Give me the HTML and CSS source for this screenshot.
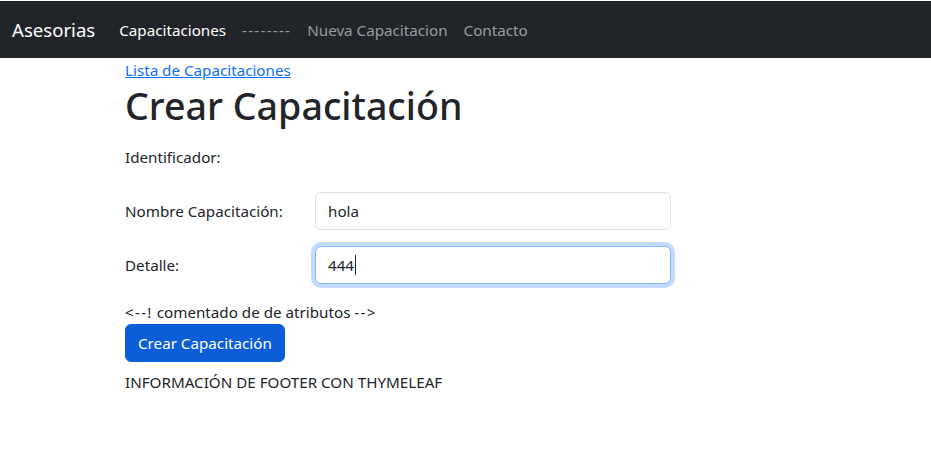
FILE: index.html
```html
<!DOCTYPE html>
<html lang="es">
<head>
<meta charset="utf-8">
<title>Crear Capacitación</title>
<link rel="stylesheet" href="styles.css">
</head>
<body>
<nav class="navbar">
  <a class="brand" href="#">Asesorias</a>
  <ul class="nav">
    <li><a class="nav-link active" href="#">Capacitaciones</a></li>
    <li><a class="nav-link dashes" href="#">--------</a></li>
    <li><a class="nav-link" href="#">Nueva Capacitacion</a></li>
    <li><a class="nav-link" href="#">Contacto</a></li>
  </ul>
</nav>
<main class="container">
  <a class="back-link" href="#">Lista de Capacitaciones</a>
  <h1 class="title">Crear Capacitación</h1>
  <form class="form">
    <div class="row">
      <label class="label">Identificador:</label>
    </div>
    <div class="row">
      <label class="label">Nombre Capacitación:</label>
      <div class="form-control">hola</div>
    </div>
    <div class="row">
      <label class="label">Detalle:</label>
      <div class="form-control focused">444<span class="caret"></span></div>
    </div>
    <p class="comment"><span class="wide">&lt;--!</span> comentado de de atributos <span class="wide">--&gt;</span></p>
    <button type="button" class="btn">Crear Capacitación</button>
  </form>
  <footer class="footer">INFORMACIÓN DE FOOTER CON THYMELEAF</footer>
</main>
</body>
</html>
```
FILE: styles.css
```css
* { box-sizing: border-box; }
html, body { margin: 0; padding: 0; }
body {
  padding-top: 1px;
  font-family: "Noto Sans", "Open Sans", sans-serif;
  font-size: 15.2px;
  line-height: 24px;
  color: #212529;
  background: #fff;
}
.navbar {
  background: #212529;
  height: 57px;
  display: flex;
  align-items: center;
  padding: 0 12px;
}
.brand {
  color: #fff;
  font-size: 18.6px;
  line-height: 30px;
  text-decoration: none;
  margin-right: 16px;
}
.nav {
  list-style: none;
  margin: 0;
  padding: 0;
  display: flex;
}
.nav-link {
  display: block;
  padding: 8px;
  color: rgba(255,255,255,.55);
  text-decoration: none;
}
.nav-link.dashes { letter-spacing: 1.25px; }
.nav-link.active { color: #fff; }
.container {
  padding-left: 125px;
}
.back-link {
  color: #0d6efd;
  text-decoration: underline;
  display: inline-block;
  line-height: 24px;
  vertical-align: top;
}
.title {
  font-size: 37.6px;
  line-height: 48px;
  font-weight: 500;
  margin: 0 0 8px;
}
.form { margin: 0; }
.row {
  display: grid;
  grid-template-columns: 190px 356px;
  align-items: center;
  height: 38px;
  margin-bottom: 16px;
}
.label { display: block; }
.form-control {
  height: 38px;
  border: 1px solid #dee2e6;
  border-radius: 6px;
  padding: 6px 12px;
  line-height: 24px;
  background: #fff;
}
.form-control.focused {
  border-color: #86b7fe;
  box-shadow: 0 0 0 4px rgba(13,110,253,.25);
}
.caret {
  display: inline-block;
  width: 1px;
  height: 20px;
  background: #212529;
  vertical-align: -4px;
  margin-left: 1px;
}
.comment { margin: 0; }
.wide { letter-spacing: 1.3px; }
.btn {
  display: block;
  font-family: inherit;
  font-size: 15.2px;
  line-height: 24px;
  height: 38px;
  padding: 6px 12px;
  color: #fff;
  background: #0b5ed7;
  border: 1px solid #0b5ed7;
  border-radius: 6px;
  margin-bottom: 8px;
}
.footer { margin: 0; }
```
